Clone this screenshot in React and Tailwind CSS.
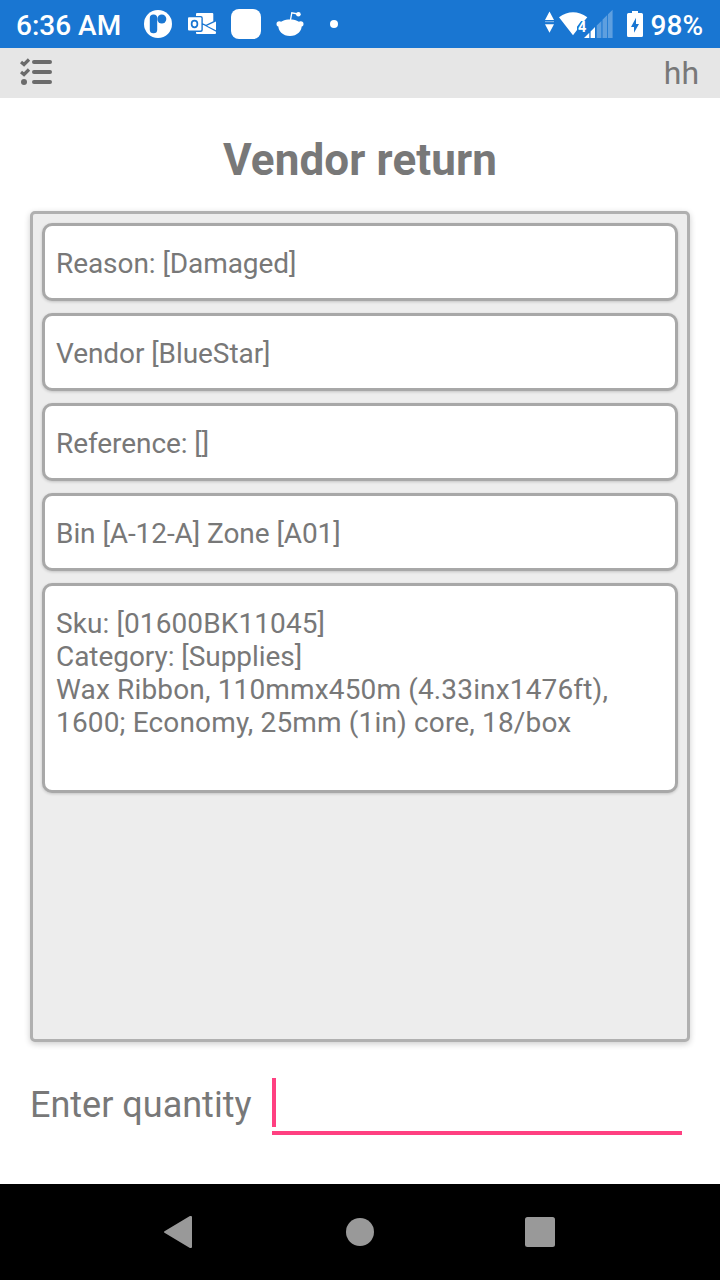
const details = [
  "Reason: [Damaged]",
  "Vendor [BlueStar]",
  "Reference: []",
  "Bin [A-12-A] Zone [A01]",
];

const cardClass =
  "rounded-[10px] border-[3px] border-[#a8a8a8] bg-white px-[11px] text-[28px] leading-[33px] shadow-[0_1px_3px_rgba(0,0,0,0.18)]";

function NotificationIcons() {
  return (
    <svg className="ml-[22px] h-12 w-[200px]" viewBox="143 0 200 48" fill="#fff">
      <circle cx="158" cy="24" r="14" />
      <rect x="149.8" y="14.5" width="7.4" height="18.8" rx="3.6" fill="#1976d2" />
      <circle cx="161.8" cy="19" r="4.5" fill="#1976d2" />
      <path d="M197 13h15.300q1 0 1 1v7.300L206 24.700 202 23h-6v-9q0-1 1-1z" />
      <path d="M216 21.500v8.700L207 25.800z" />
      <path d="M196 25h7.500L216 31.800V33q0 1-1 1h-18q-1 0-1-1z" />
      <rect x="187" y="16" width="15.800" height="16" rx="2" fill="#1976d2" />
      <rect x="188" y="17.300" width="13.400" height="13.200" rx="1" />
      <ellipse cx="194.500" cy="24" rx="2.900" ry="3.300" fill="none" stroke="#1976d2" strokeWidth="1.700" />
      <rect x="231" y="9" width="30" height="30" rx="8" />
      <path d="M278.500 25C279 21.500 285 19.500 290 19.500S301 21.500 301.500 25C302.500 31 297 36 290 36S277.500 31 278.500 25z" />
      <circle cx="279.300" cy="24" r="2.800" />
      <circle cx="300.700" cy="24" r="2.800" />
      <path d="M290.300 21l1.500-8.200 6 1.200" fill="none" stroke="#fff" strokeWidth="1.300" />
      <circle cx="298.400" cy="14.200" r="2.300" />
      <circle cx="334" cy="24" r="4" />
    </svg>
  );
}

function SystemIcons() {
  return (
    <svg className="h-12 w-[104px]" viewBox="543 0 104 48" fill="#fff">
      <path d="M549.500 11.500l4.500 8.500h-9zM549.500 32.800l4.500-8.500h-9z" />
      <path d="M545 21.700h9" stroke="#fff" strokeWidth="1" opacity="0.500" />
      <path d="M559 17.200q14-9.900 28.300 0l-3.100 3.800h-3L577 26.800v3.200l-4 5.300z" />
      <text x="578" y="32" fontFamily="Roboto, sans-serif" fontSize="14.500" fontWeight="700">4</text>
      <path d="M584 38l5.300-5.300V38zM590.600 31.500l4.400-4.400V38h-4.400z" />
      <path d="M596.700 25.600l4.700-4.700V38h-4.700zM602.500 19.800l4.700-4.700V38h-4.700zM608 14.300l4.600-4.600V38h-4.600z" opacity="0.300" />
      <path d="M632 13v-2h6v2h3.500q1.500 0 1.500 1.500v21q0 1.500-1.500 1.500h-13q-1.500 0-1.500-1.500v-21q0-1.500 1.500-1.500z" />
      <path d="M636 17.800V24h3l-5 8.800V27h-3z" fill="#1976d2" />
    </svg>
  );
}

function ChecklistIcon() {
  return (
    <svg className="h-[30px] w-[34px]" viewBox="20 58 34 30" fill="none" stroke="#6b6b6b">
      <path d="M21 62l3 2.500 5-5M21 72l3 2.500 5-5" strokeWidth="3.200" />
      <path d="M34 62h16M34 72h16M34 82h16" strokeWidth="4" strokeLinecap="round" />
      <circle cx="24" cy="82" r="3" fill="#6b6b6b" stroke="none" />
    </svg>
  );
}

export default function App() {
  return (
    <div className="flex h-[1280px] w-[720px] flex-col overflow-hidden bg-white font-[Roboto,sans-serif] text-[#787878]">
      <header className="flex h-12 items-center bg-[#1976d2] pl-4 text-[28px] font-medium text-white">
        <span className="w-[105px] whitespace-nowrap pt-[3px]">6:36 AM</span>
        <NotificationIcons />
        <div className="ml-auto flex items-center pr-[17px]">
          <SystemIcons />
          <span className="ml-1 whitespace-nowrap pt-[3px]">98%</span>
        </div>
      </header>
      <nav className="flex h-[50px] items-center justify-between bg-[#e6e6e6] pr-[21px] pl-5">
        <ChecklistIcon />
        <span className="text-[32px] leading-[50px]">hh</span>
      </nav>
      <main className="flex flex-1 flex-col px-[30px]">
        <h1 className="flex h-[113px] items-center justify-center pt-[11px] text-[44px] font-bold tracking-[0.12px]">Vendor return</h1>
        <section className="flex h-[831px] flex-col gap-3 rounded-[5px] border-[3px] border-[#b0b0b0] bg-[#ededed] p-[9px] shadow-[0_2px_6px_rgba(0,0,0,0.2)]">
          {details.map((text) => (
            <div key={text} className={`${cardClass} flex h-[78px] items-center pt-[2px] tracking-[-0.07px]`}>{text}</div>
          ))}
          <div className={`${cardClass} h-[210px] pt-[21px]`}>
            <p className="tracking-[0.1px]">Sku: [01600BK11045]</p>
            <p className="tracking-[-0.05px]">Category: [Supplies]</p>
            <p className="tracking-[0.15px]">Wax Ribbon, 110mmx450m (4.33inx1476ft), 1600; Economy, 25mm (1in) core, 18/box</p>
          </div>
        </section>
        <label className="mt-9 flex h-[57px] items-start">
          <span className="w-[242px] whitespace-nowrap text-[36px] leading-[54px]">Enter quantity</span>
          <span className="flex h-[57px] w-[410px] flex-col justify-between border-b-4 border-[#ff4081]">
            <span className="h-[49px] w-1 bg-[#ff4081]" />
          </span>
        </label>
      </main>
      <footer className="flex h-24 items-center bg-black">
        <svg className="h-24 w-[720px]" viewBox="0 1184 720 96" fill="#999">
          <path d="M165 1232l25-15h1v30h-1z" stroke="#999" strokeWidth="2" strokeLinejoin="round" />
          <circle cx="360" cy="1232" r="14" />
          <rect x="525" y="1217" width="30" height="30" rx="2.500" />
        </svg>
      </footer>
    </div>
  );
}
